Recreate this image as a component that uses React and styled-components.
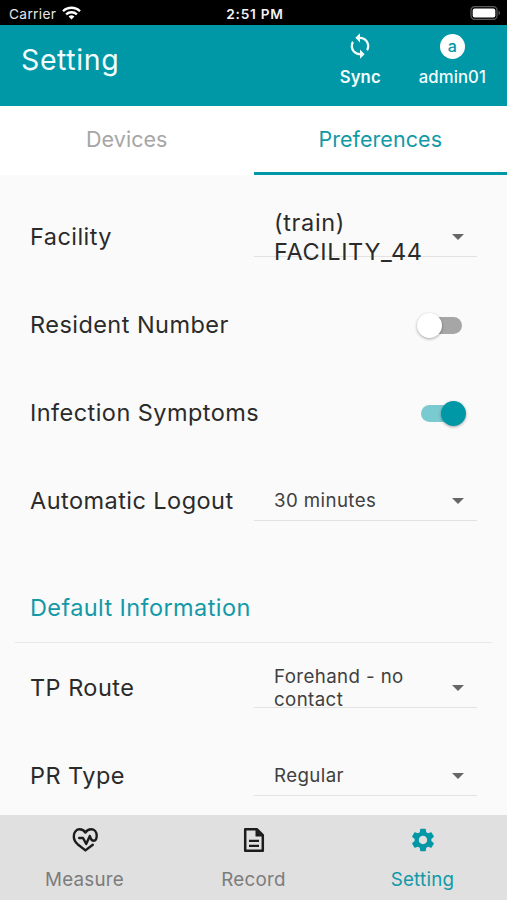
import React from 'react';
import styled, { createGlobalStyle } from 'styled-components';
import { MdSync, MdSettings } from 'react-icons/md';

const teal = '#0097a7';

const GlobalStyle = createGlobalStyle`
	* {
		box-sizing: border-box;
	}
	body {
		margin: 0;
		font-family: Inter, 'Liberation Sans', sans-serif;
		background: #fafafa;
		color: #2b2b2b;
	}
`;

const Screen = styled.div`
	display: flex;
	flex-direction: column;
	width: 507px;
	height: 900px;
	overflow: hidden;
`;

const StatusBar = styled.div`
	flex: none;
	display: grid;
	grid-template-columns: 1fr auto 1fr;
	align-items: center;
	height: 25px;
	padding: 2px 6px 0 9px;
	background: #000;
	color: #e6e6e6;
	font-size: 13.7px;
`;

const Carrier = styled.div`
	display: flex;
	align-items: center;
	gap: 6px;
	letter-spacing: 0.35px;

	svg {
		margin-top: -2px;
	}
`;

const Clock = styled.div`
	color: #f2f2f2;
	font-weight: 600;
	letter-spacing: 0.75px;
`;

const Battery = styled.svg`
	justify-self: end;
	margin-top: -1px;
`;

const Header = styled.header`
	flex: none;
	display: flex;
	justify-content: space-between;
	height: 81px;
	padding: 0 21px 0 21px;
	background: ${teal};
	color: #f3fdfd;
`;

const Title = styled.h1`
	margin: 17px 0 0;
	font-size: 28.5px;
	line-height: 36px;
	font-weight: 400;
	letter-spacing: 0.6px;
`;

const Actions = styled.div`
	display: flex;
	gap: 38px;
`;

const Action = styled.div`
	display: flex;
	flex-direction: column;
	align-items: center;
	padding-top: 7px;
	font-size: 16.7px;
	line-height: 20px;
	font-weight: ${(p) => (p.$bold ? 600 : 500)};
	letter-spacing: 0.1px;
`;

const ActionIcon = styled.div`
	display: flex;
	align-items: center;
	justify-content: center;
	height: 28px;
	margin-bottom: 7px;
	font-size: 28px;
`;

const Avatar = styled.div`
	width: 25px;
	height: 25px;
	border-radius: 50%;
	background: #fff;
	color: ${teal};
	font-size: 16px;
	line-height: 24px;
	text-align: center;
`;

const Tabs = styled.nav`
	flex: none;
	display: flex;
	height: 69px;
	background: #fff;
`;

const Tab = styled.div`
	flex: 1;
	padding-top: 19px;
	border-bottom: 3px solid ${(p) => (p.$active ? teal : 'transparent')};
	color: ${(p) => (p.$active ? '#1299a8' : '#a6a6a6')};
	font-size: 21.5px;
	line-height: 28px;
	letter-spacing: 0.05px;
	text-align: center;
`;

const Content = styled.main`
	flex: 1;
	min-height: 0;
	padding: 18px 15px 0;
	overflow: hidden;
`;

const Row = styled.div`
	display: flex;
	align-items: center;
	justify-content: space-between;
	height: 88px;
	padding: 0 15px;
`;

const Label = styled.div`
	font-size: 23.5px;
	line-height: 30px;
	letter-spacing: 0.45px;
	white-space: nowrap;
`;

const Select = styled.div`
	display: flex;
	align-items: center;
	justify-content: space-between;
	width: 223px;
	height: 40px;
	padding: 0 13px 0 20px;
	border-bottom: 1px solid #e2e2e2;
`;

const Value = styled.div`
	width: 165px;
	color: ${(p) => (p.$large ? '#2b2b2b' : '#404040')};
	font-size: ${(p) => (p.$large ? '23.5px' : '18.7px')};
	line-height: ${(p) => (p.$large ? '29px' : '23px')};
	letter-spacing: ${(p) => (p.$large ? '0.65px' : '0.4px')};
`;

const Caret = styled.span`
	border: 6px solid transparent;
	border-top-color: #666;
	border-bottom: 0;
`;

const Switch = styled.div`
	display: flex;
	align-items: center;
	justify-content: ${(p) => (p.$on ? 'flex-end' : 'flex-start')};
	width: 41px;
	height: 17px;
	margin-right: 15px;
	border-radius: 9px;
	background: ${(p) => (p.$on ? '#7acad1' : '#a6a6a6')};
`;

const Knob = styled.div`
	flex: none;
	width: 25px;
	height: 25px;
	margin: 0 -4px;
	border-radius: 50%;
	background: ${(p) => (p.$on ? teal : '#fff')};
	box-shadow: 0 1px 3px rgba(0, 0, 0, 0.35);
`;

const SectionTitle = styled.h2`
	margin: 19px 0 1px;
	padding: 29px 15px 19px;
	border-bottom: 1px solid #e8e8e8;
	color: #1299a8;
	font-size: 23.5px;
	line-height: 30px;
	font-weight: 400;
	letter-spacing: 0.4px;
`;

const BottomNav = styled.nav`
	flex: none;
	display: flex;
	height: 85px;
	background: #e0e0e0;
`;

const NavItem = styled.div`
	flex: 1;
	display: flex;
	flex-direction: column;
	align-items: center;
	gap: 14px;
	padding-top: 11px;
	color: ${(p) => (p.$active ? '#1299a8' : '#7c7c7c')};
	font-size: 18.8px;
	line-height: 24px;
	letter-spacing: 0.25px;

	svg {
		color: ${(p) => (p.$active ? teal : '#1c1c1c')};
	}
`;

function WifiIcon() {
	return (
		<svg width="19" height="14" viewBox="0 0 19 14" fill="none" stroke="#fff" strokeWidth="2.3">
			<path d="M1 5.2a12.2 12.2 0 0 1 17 0" />
			<path d="M4.1 8.4a7.8 7.8 0 0 1 10.8 0" />
			<path d="M9.5 13.5 6.6 10.6a4.2 4.2 0 0 1 5.8 0z" fill="#fff" stroke="none" />
		</svg>
	);
}

function HeartPulseIcon() {
	return (
		<svg width="28" height="28" viewBox="0 0 28 28" fill="none" stroke="currentColor" strokeWidth="2.4" strokeLinecap="round" strokeLinejoin="round">
			<path d="M21.8 18.7 14.4 24.4 6.6 18.2C3.6 15.6 2.8 13 2.8 10.2 2.8 6 5.4 3.3 8.7 3.3c2.4 0 4.3 1.1 5.7 3.2 1.400-2.100 3.300-3.200 5.700-3.200 3.300 0 5.600 2.700 5.600 6.500 0 3.100-1 4.900-2.900 4.900-1.700 0-2.500-.8-3-2.200l-1-2.600-3.600 8-3.200-5.900H8.200" />
		</svg>
	);
}

function DocumentIcon() {
	return (
		<svg width="28" height="28" viewBox="0 0 28 28" fill="none" stroke="currentColor" strokeWidth="2.5" strokeLinejoin="round">
			<path d="M5.2 3.2h11.600l6 6v15.600H5.200z" />
			<path d="M15.5 3v7.500h7.500z" fill="currentColor" stroke="none" />
			<path d="M9 14.8h10M9 19.8h10" strokeWidth="2.2" />
		</svg>
	);
}

function SelectField({ large, children }) {
	return (
		<Select>
			<Value $large={large}>{children}</Value>
			<Caret />
		</Select>
	);
}

function Toggle({ on }) {
	return (
		<Switch $on={on}>
			<Knob $on={on} />
		</Switch>
	);
}

function App() {
	return (
		<Screen>
			<GlobalStyle />
			<StatusBar>
				<Carrier>
					Carrier
					<WifiIcon />
				</Carrier>
				<Clock>2:51 PM</Clock>
				<Battery width="31" height="14" viewBox="0 0 31 14">
					<rect x="1" y="0.7" width="26" height="12.6" rx="3.6" fill="none" stroke="#5c5c5c" strokeWidth="1.2" />
					<rect x="2.7" y="2.4" width="22.6" height="9.2" rx="2" fill="#fff" />
					<path d="M28.6 4.8c1.8.6 1.8 3.8 0 4.4z" fill="#5c5c5c" />
				</Battery>
			</StatusBar>
			<Header>
				<Title>Setting</Title>
				<Actions>
					<Action $bold>
						<ActionIcon>
							<MdSync />
						</ActionIcon>
						Sync
					</Action>
					<Action>
						<ActionIcon>
							<Avatar>a</Avatar>
						</ActionIcon>
						admin01
					</Action>
				</Actions>
			</Header>
			<Tabs>
				<Tab>Devices</Tab>
				<Tab $active>Preferences</Tab>
			</Tabs>
			<Content>
				<Row>
					<Label>Facility</Label>
					<SelectField large>(train) FACILITY_44</SelectField>
				</Row>
				<Row>
					<Label>Resident Number</Label>
					<Toggle />
				</Row>
				<Row>
					<Label>Infection Symptoms</Label>
					<Toggle on />
				</Row>
				<Row>
					<Label>Automatic Logout</Label>
					<SelectField>30 minutes</SelectField>
				</Row>
				<SectionTitle>Default Information</SectionTitle>
				<Row>
					<Label>TP Route</Label>
					<SelectField>Forehand - no contact</SelectField>
				</Row>
				<Row>
					<Label>PR Type</Label>
					<SelectField>Regular</SelectField>
				</Row>
			</Content>
			<BottomNav>
				<NavItem>
					<HeartPulseIcon />
					Measure
				</NavItem>
				<NavItem>
					<DocumentIcon />
					Record
				</NavItem>
				<NavItem $active>
					<MdSettings size={28} />
					Setting
				</NavItem>
			</BottomNav>
		</Screen>
	);
}

export default App;
